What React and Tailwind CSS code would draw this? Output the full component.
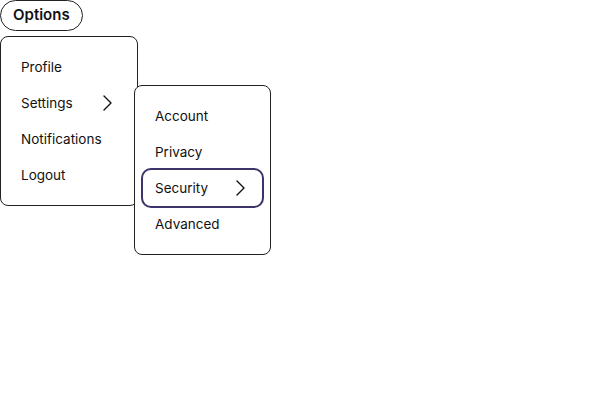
const Chevron = () => (
  <svg width="16" height="16" viewBox="0 0 16 16" fill="none" className="shrink-0">
    <path d="M3 1 L10 8 L3 15" stroke="#111" strokeWidth="1.4" strokeLinecap="round" strokeLinejoin="round" />
  </svg>
);

function Item({ label, sub, active }) {
  return (
    <div
      className={
        "flex h-9 items-center justify-between rounded-lg px-3 text-[13.5px] text-[#111] " +
        (active ? "outline-2 outline-[#3a3468]" : "")
      }
    >
      <span>{label}</span>
      {sub && <Chevron />}
    </div>
  );
}

export default function App() {
  return (
    <div className="relative h-[400px] w-[600px] bg-white font-['Inter',sans-serif]">
      <button className="flex h-[31px] items-center rounded-full border border-[#222] px-3 text-[15px] font-semibold text-[#111]">
        Options
      </button>

      <div className="relative mt-[5px] w-[138px] rounded-lg border border-[#222] bg-white px-2 py-3">
        <Item label="Profile" />
        <Item label="Settings" sub />
        <Item label="Notifications" />
        <Item label="Logout" />

        <div className="absolute left-[133px] top-[48px] w-[137px] rounded-lg border border-[#222] bg-white px-2 py-3">
          <Item label="Account" />
          <Item label="Privacy" />
          <Item label="Security" sub active />
          <Item label="Advanced" />
        </div>
      </div>
    </div>
  );
}
